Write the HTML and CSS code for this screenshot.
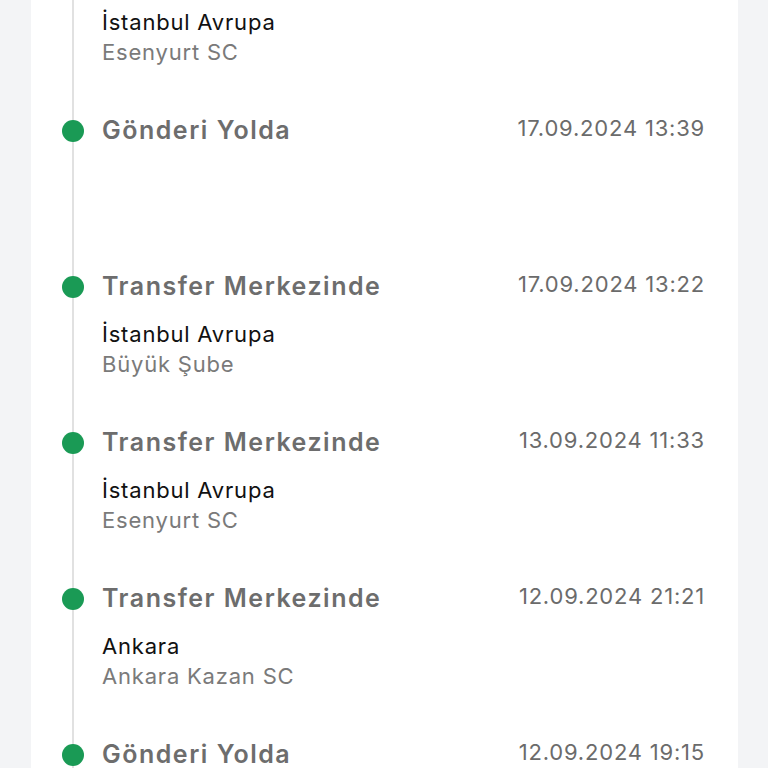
FILE: index.html
```html
<!DOCTYPE html>
<html lang="tr">
<head>
  <meta charset="UTF-8">
  <title>Gönderi Hareketleri</title>
  <link rel="stylesheet" href="styles.css">
</head>
<body>
  <div class="card">
    <div class="timeline">

      <!-- first event is scrolled off the top -->
      <div class="event cut">
        <div class="place">İstanbul Avrupa</div>
        <div class="branch">Esenyurt SC</div>
      </div>

      <div class="event">
        <div class="head">
          <span class="dot"></span>
          <span class="status">Gönderi Yolda</span>
          <span class="date">17.09.2024 13:39</span>
        </div>
      </div>

      <div class="event">
        <div class="head">
          <span class="dot"></span>
          <span class="status">Transfer Merkezinde</span>
          <span class="date">17.09.2024 13:22</span>
        </div>
        <div class="place">İstanbul Avrupa</div>
        <div class="branch">Büyük Şube</div>
      </div>

      <div class="event">
        <div class="head">
          <span class="dot"></span>
          <span class="status">Transfer Merkezinde</span>
          <span class="date">13.09.2024 11:33</span>
        </div>
        <div class="place">İstanbul Avrupa</div>
        <div class="branch">Esenyurt SC</div>
      </div>

      <div class="event">
        <div class="head">
          <span class="dot"></span>
          <span class="status">Transfer Merkezinde</span>
          <span class="date">12.09.2024 21:21</span>
        </div>
        <div class="place">Ankara</div>
        <div class="branch">Ankara Kazan SC</div>
      </div>

      <div class="event">
        <div class="head">
          <span class="dot"></span>
          <span class="status">Gönderi Yolda</span>
          <span class="date">12.09.2024 19:15</span>
        </div>
      </div>

    </div>
  </div>
</body>
</html>
```

FILE: styles.css
```css
body {
  margin: 0;
  background: #f3f4f6;
  font-family: Inter, "Noto Sans", sans-serif;
  overflow: hidden;
}

.card {
  margin: 0 30px 0 31px;
  background: #fff;
  min-height: 768px;
  padding-right: 33px;
}

.timeline {
  position: relative;
  padding-left: 71px;
}

/* the vertical rail behind the dots */
.timeline::before {
  content: "";
  position: absolute;
  left: 41px;
  top: 0;
  bottom: 0;
  width: 2px;
  background: #e1e1e1;
}

.event {
  min-height: 156px;
  box-sizing: border-box;
  padding-bottom: 48px;
}

.event.cut {
  min-height: 0;
  padding-top: 7px;
}

.head {
  position: relative;
  display: flex;
  justify-content: space-between;
  align-items: flex-start;
  height: 30px;
}

.dot {
  position: absolute;
  left: -40px;
  top: 5px;
  width: 22px;
  height: 22px;
  border-radius: 50%;
  background: #1a9a55;
}

.status {
  font-size: 25px;
  line-height: 30px;
  font-weight: 600;
  letter-spacing: 1.5px;
  color: #6d6d6d;
}

.date {
  font-size: 22px;
  line-height: 26px;
  letter-spacing: 0.8px;
  color: #6b6b6b;
}

.place {
  margin-top: 18px;
  font-size: 22px;
  line-height: 30px;
  letter-spacing: 0.8px;
  color: #111;
}

.cut .place {
  margin-top: 0;
}

.branch {
  font-size: 22px;
  line-height: 30px;
  letter-spacing: 0.8px;
  color: #7a7a7a;
}
```
